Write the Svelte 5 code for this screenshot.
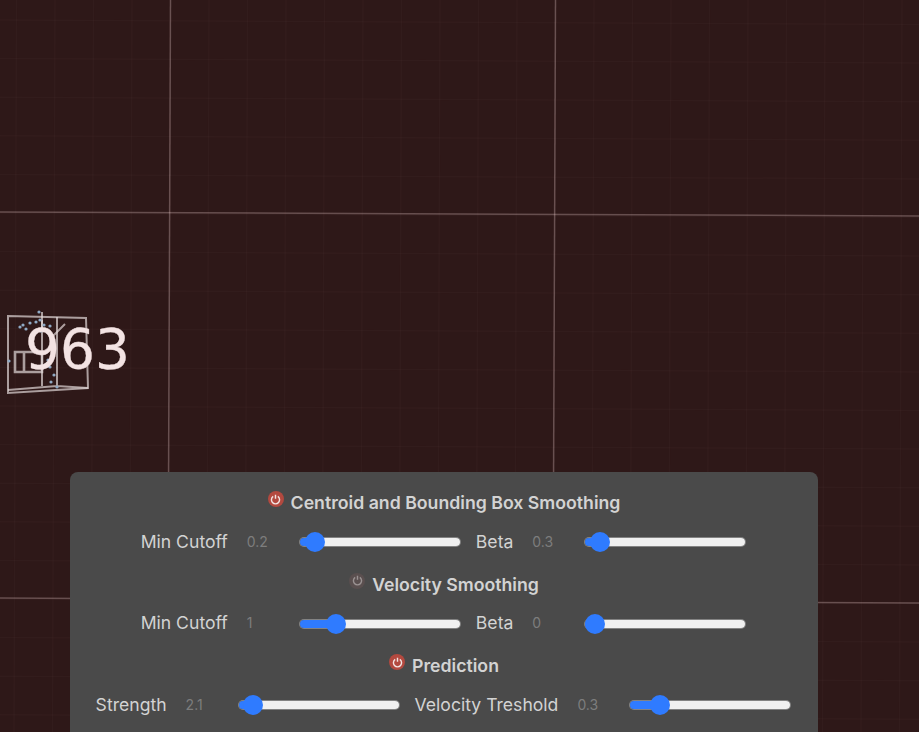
<script>
	const sections = [
		{
			title: 'Centroid and Bounding Box Smoothing',
			on: true,
			controls: [
				{ label: 'Min Cutoff', value: 0.2, max: 5.3 },
				{ label: 'Beta', value: 0.3, max: 10 }
			]
		},
		{
			title: 'Velocity Smoothing',
			on: false,
			controls: [
				{ label: 'Min Cutoff', value: 1, max: 5.3 },
				{ label: 'Beta', value: 0, max: 10 }
			]
		},
		{
			title: 'Prediction',
			on: true,
			controls: [
				{ label: 'Strength', value: 2.1, max: 60 },
				{ label: 'Velocity Treshold', value: 0.3, max: 2.1 }
			]
		}
	];

	// floor grid, slightly tilted like the 3d camera
	const minor = [];
	for (let i = -5; i < 25; i++) {
		minor.push({ x1: 16.5 + i * 38.5, x2: 14 + i * 38.5, y1: 20 + i * 38.6, y2: 24.5 + i * 38.6 });
	}
	const major = [
		{ x1: 170.5, y1: 0, x2: 167.5, y2: 732 },
		{ x1: 555.5, y1: 0, x2: 552.5, y2: 732 },
		{ x1: 0, y1: 212, x2: 919, y2: 216 },
		{ x1: 0, y1: 598, x2: 919, y2: 603 }
	];
	const dots = [[20,327],[23,325],[26,329],[30,323],[36,322],[44,325],[50,326],[40,320],[41,331],[46,352],[48,360],[50,367],[54,375],[57,387],[51,382],[39,312],[9,361]];
</script>

<div class="scene">
	<svg class="canvas" width="919" height="732" viewBox="0 0 919 732">
		{#each minor as l}
			<line class="minor" x1={l.x1} y1="0" x2={l.x2} y2="732" />
			<line class="minor" x1="0" y1={l.y1} x2="919" y2={l.y2} />
		{/each}
		{#each major as l}
			<line class="major" x1={l.x1} y1={l.y1} x2={l.x2} y2={l.y2} />
		{/each}
		<g class="box">
			<path d="M8 316 L86 318 L88 388 L8 393 Z" />
			<path d="M57 317 L57 388 M42 320 L42 386 M8 390 L57 386 L88 388" />
			<path class="inner" d="M15 352 L42 352 L42 372 L15 372 Z M24 352 L24 372" />
			<path d="M42 312 L42 330 M53 336 L65 324" />
		</g>
		{#each dots as d}
			<circle class="dot" cx={d[0]} cy={d[1]} r="1.6" />
		{/each}
		<text class="count" x="25" y="368">963</text>
	</svg>

	<div class="panel">
		{#each sections as section}
			<div class="head">
				<span class="power" class:on={section.on}>
					<svg width="11" height="11" viewBox="0 0 10 10">
						<path d="M2.9 2.2 A3.7 3.7 0 1 0 7.1 2.2 M5 0.6 V4.4" />
					</svg>
				</span>
				<h2>{section.title}</h2>
			</div>
			<div class="row">
				{#each section.controls as c}
					<label>
						<span class="name">{c.label}</span>
						<span class="val">{c.value}</span>
						<input
							type="range"
							min="0"
							max={c.max}
							step="0.1"
							value={c.value}
							style="--fill: {10 + (c.value / c.max) * 140}px"
						/>
					</label>
				{/each}
			</div>
		{/each}
	</div>
</div>

<style>
	:global(body) {
		margin: 0;
		background: #2e1818;
		overflow: hidden;
	}

	.scene {
		position: relative;
		height: 732px;
		overflow: hidden;
		font-family: Inter, 'Open Sans', sans-serif;
	}

	.canvas {
		position: absolute;
		inset: 0;
		filter: blur(0.5px);
	}

	.minor {
		stroke: rgba(255, 220, 220, 0.022);
		stroke-width: 1.5;
	}

	.major {
		stroke: rgba(255, 225, 225, 0.27);
		stroke-width: 1.5;
	}

	.box path {
		fill: none;
		stroke: rgba(225, 215, 215, 0.7);
		stroke-width: 2;
	}

	.box .inner {
		stroke-width: 2.6;
	}

	.dot {
		fill: #8fa9c4;
	}

	.count {
		font-family: 'DejaVu Sans', sans-serif;
		font-size: 55px;
		fill: #f3e3e3;
		stroke: #f3e3e3;
		stroke-width: 0.3;
	}

	.panel {
		position: absolute;
		left: 70px;
		top: 472px;
		width: 748px;
		height: 300px;
		box-sizing: border-box;
		padding-top: 19px;
		background: #4a4a4a;
		border-radius: 8px;
	}

	.head {
		display: flex;
		justify-content: center;
		align-items: flex-start;
		gap: 7px;
		height: 24px;
	}

	h2 {
		margin: 0;
		font-size: 17.7px;
		line-height: 24px;
		font-weight: 600;
		color: #d3d3d3;
	}

	.power {
		display: flex;
		align-items: center;
		justify-content: center;
		width: 16px;
		height: 16px;
		border-radius: 50%;
		background: #5a4f4f;
	}

	.power.on {
		background: #b3493f;
	}

	.power svg path {
		fill: none;
		stroke: #9a9292;
		stroke-width: 1.3;
	}

	.power.on svg path {
		stroke: #f3e4e2;
	}

	.row {
		display: flex;
		justify-content: center;
		gap: 16px;
		height: 34px;
		margin: 9px 0 14.5px;
		padding-right: 2px;
	}

	label {
		display: flex;
		align-items: center;
		gap: 19px;
	}

	.name {
		font-size: 17.6px;
		color: #d3d3d3;
	}

	.val {
		width: 34px;
		font-size: 14px;
		color: #7d7d7d;
	}

	input {
		appearance: none;
		-webkit-appearance: none;
		margin: 2px 0 0;
		width: 160px;
		height: 8px;
		border-radius: 4px;
		box-shadow: 0 0 0 1px rgba(170, 170, 170, 0.6);
		background: linear-gradient(to right, #2f7bff var(--fill), #f0f0f0 var(--fill));
	}

	input::-webkit-slider-thumb {
		-webkit-appearance: none;
		width: 20px;
		height: 20px;
		border-radius: 50%;
		background: #2f7bff;
	}
</style>
